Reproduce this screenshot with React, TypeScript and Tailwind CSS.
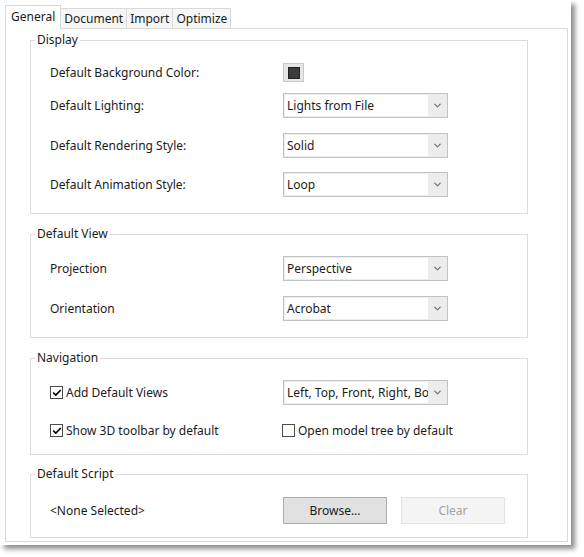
import { Check, ChevronDown } from "lucide-react";

const font = { fontFamily: '"Noto Sans", "Open Sans", sans-serif' };

const Dropdown = ({ value }: { value: string }) => (
  <div className="flex h-[25px] w-[165px] border border-[#c2c2c2] bg-[#ececec] p-[1px]">
    <div className="flex flex-1 items-center overflow-hidden whitespace-nowrap bg-white pl-[2px]">
      {value}
    </div>
    <div className="flex w-[18px] items-center justify-center">
      <ChevronDown className="h-[11px] w-[11px] text-[#707070]" strokeWidth={2.5} />
    </div>
  </div>
);

const Checkbox = ({ checked, label }: { checked?: boolean; label: string }) => (
  <div className="flex items-center gap-[3px]">
    <div className="flex h-[13px] w-[13px] items-center justify-center border border-[#4a4a4a] bg-white">
      {checked && <Check className="h-[10px] w-[10px] text-black" strokeWidth={4} />}
    </div>
    <span>{label}</span>
  </div>
);

const Group = ({ title, className, children }: { title: string; className?: string; children: React.ReactNode }) => (
  <fieldset className={`mx-0 w-[498px] border border-[#dcdcdc] pl-[19px] ${className ?? ""}`}>
    <legend className="-ml-[15px] px-[2px] leading-[16px]">{title}</legend>
    {children}
  </fieldset>
);

const Row = ({ label, className, children }: { label: React.ReactNode; className?: string; children: React.ReactNode }) => (
  <div className={`flex h-[25px] items-center ${className ?? ""}`}>
    <div className="w-[233px]">{label}</div>
    {children}
  </div>
);

const tabs = ["General", "Document", "Import", "Optimize"];

export default function App() {
  return (
    <div className="h-[557px] w-[584px] bg-white text-[12px] text-[#1b1b1b]" style={font}>
      <div className="h-[545px] w-[571px] bg-white pl-[5px] pt-[5px] shadow-[4px_4px_5px_rgba(0,0,0,0.45)]">
        {/* tab strip */}
        <div className="flex items-end">
          {tabs.map((t, i) =>
            i === 0 ? (
              <div
                key={t}
                className="relative z-10 -mb-[1px] flex h-[24px] items-center border border-b-0 border-[#d9d9d9] bg-white px-[5px] pb-[2px]"
              >
                {t}
              </div>
            ) : (
              <div
                key={t}
                className="-ml-[1px] flex h-[20px] items-center border border-b-0 border-[#d9d9d9] bg-[#f6f6f6] px-[3px]"
              >
                {t}
              </div>
            )
          )}
        </div>

        {/* page */}
        <div className="flex h-[514px] w-[563px] flex-col gap-[12px] border border-[#d9d9d9] pl-[24px] pt-[3px]">
          <Group title="Display" className="pb-[16px] pt-[12px]">
            <Row label="Default Background Color:">
              <div className="flex h-[19px] w-[21px] items-center justify-center border border-[#c8c8c8] bg-[#e6e6e6]">
                <div className="h-[12px] w-[12px] border border-[#222] bg-[#3b3b3b]" />
              </div>
            </Row>
            <Row label="Default Lighting:" className="mt-[8px]">
              <Dropdown value="Lights from File" />
            </Row>
            <Row label="Default Rendering Style:" className="mt-[15px]">
              <Dropdown value="Solid" />
            </Row>
            <Row label="Default Animation Style:" className="mt-[14px]">
              <Dropdown value="Loop" />
            </Row>
          </Group>

          <Group title="Default View" className="pb-[16px] pt-[14px]">
            <Row label="Projection">
              <Dropdown value="Perspective" />
            </Row>
            <Row label="Orientation" className="mt-[15px]">
              <Dropdown value="Acrobat" />
            </Row>
          </Group>

          <Group title="Navigation" className="pb-[11px] pt-[14px]">
            <Row label={<Checkbox checked label="Add Default Views" />}>
              <Dropdown value="Left, Top, Front, Right, Bottom" />
            </Row>
            <Row label={<Checkbox checked label="Show 3D toolbar by default" />} className="mt-[13px]">
              <div className="-ml-[1px]">
                <Checkbox label="Open model tree by default" />
              </div>
            </Row>
          </Group>

          <Group title="Default Script" className="-mt-[1px] pb-[13px] pt-[15px]">
            <div className="flex h-[27px] items-center">
              <div className="w-[233px]">&lt;None Selected&gt;</div>
              <button className="h-[27px] w-[104px] border border-[#adadad] bg-[#e1e1e1]">Browse...</button>
              <button disabled className="ml-[14px] h-[27px] w-[104px] border border-[#e3e3e3] bg-[#f4f4f4] text-[#a3a3a3]">
                Clear
              </button>
            </div>
          </Group>
        </div>
      </div>
    </div>
  );
}
